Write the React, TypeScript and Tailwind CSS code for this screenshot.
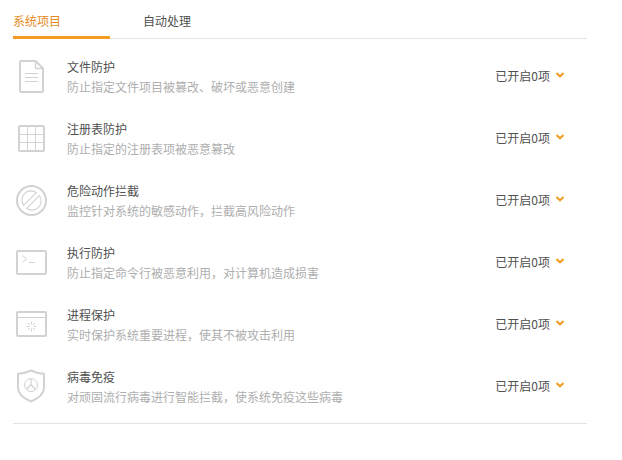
import type { ReactNode } from "react";

const tabs = [
  { label: "系统项目", active: true },
  { label: "自动处理", active: false },
];

const items = [
  { icon: <FileIcon />, title: "文件防护", desc: "防止指定文件项目被篡改、破坏或恶意创建", count: 0 },
  { icon: <GridIcon />, title: "注册表防护", desc: "防止指定的注册表项被恶意篡改", count: 0 },
  { icon: <BlockIcon />, title: "危险动作拦截", desc: "监控针对系统的敏感动作，拦截高风险动作", count: 0 },
  { icon: <TerminalIcon />, title: "执行防护", desc: "防止指定命令行被恶意利用，对计算机造成损害", count: 0 },
  { icon: <ProcessIcon />, title: "进程保护", desc: "实时保护系统重要进程，使其不被攻击利用", count: 0 },
  { icon: <ShieldIcon />, title: "病毒免疫", desc: "对顽固流行病毒进行智能拦截，使系统免疫这些病毒", count: 0 },
];

function Icon({ children }: { children: ReactNode }) {
  return (
    <svg
      className="h-9 w-9 shrink-0 text-[#d2d2d0]"
      viewBox="0 0 36 36"
      fill="none"
      stroke="currentColor"
      strokeWidth="2"
      strokeLinejoin="round"
      aria-hidden="true"
    >
      {children}
    </svg>
  );
}

function FileIcon() {
  return (
    <Icon>
      <path d="M8 2h14.5l7.5 7.5V32a1 1 0 0 1-1 1H8a1 1 0 0 1-1-1V3a1 1 0 0 1 1-1Z" />
      <path d="M22.5 2v7.5H30" strokeWidth="1.4" />
      <path d="M12 14.5h13M12 18.5h13M12 22.5h13" strokeWidth="1" />
    </Icon>
  );
}

function GridIcon() {
  return (
    <Icon>
      <rect x="6" y="5" width="25" height="25" rx="1" />
      <path d="M14.5 5v25M22.5 5v25M6 13.5h25M6 21.5h25" strokeWidth="1" />
    </Icon>
  );
}

function BlockIcon() {
  return (
    <Icon>
      <circle cx="18.5" cy="17.5" r="14.5" />
      <path d="M10.7 22.3A9 9 0 0 1 23.3 9.7Z" strokeWidth="1.1" />
      <path d="M26.3 12.7A9 9 0 0 1 13.7 25.3Z" strokeWidth="1.1" />
    </Icon>
  );
}

function TerminalIcon() {
  return (
    <Icon>
      <rect x="4" y="6" width="29" height="23" rx="1" />
      <path d="m9.5 10.5 4 3.5-4 3.5M16 17.5h6" strokeWidth="1" />
    </Icon>
  );
}

function ProcessIcon() {
  return (
    <Icon>
      <rect x="4" y="5" width="29" height="24" rx="1" />
      <path d="M4 10.5h29" strokeWidth="1" />
      <path
        d="M18.500 14.500v3M18.500 21.500v3M13.500 19.500h3M20.500 19.500h3M15 16l2 2M20 21l2 2M15 23l2-2M20 18l2-2"
        strokeWidth="1"
      />
    </Icon>
  );
}

function ShieldIcon() {
  return (
    <Icon>
      <path d="M18 1.5c4 2 8.5 3 13 3.2V19c0 6-5 10-13 13.5C10 29 5 25 5 19V4.700C9.500 4.500 14 3.500 18 1.500Z" />
      <circle cx="18" cy="16" r="6.5" strokeWidth="1" />
      <path d="M18 9.5v6l-4.500 5M18 15.5l4.500 5" strokeWidth="1.2" />
    </Icon>
  );
}

function Chevron() {
  return (
    <svg className="mb-0.5 h-2 w-2" viewBox="0 0 8 8" fill="none" stroke="#f39c1f" strokeWidth="2" aria-hidden="true">
      <path d="m.5 2 3.500 3.300L7.500 2" />
    </svg>
  );
}

export default function App() {
  return (
    <div className="min-h-screen bg-white pr-[35px] pl-[13px] font-['Noto_Sans_CJK_SC',sans-serif] text-xs text-[#505050]">
      <nav className="flex gap-[33px] border-b border-[#e4e4e4] pt-1">
        {tabs.map((tab) => (
          <a
            key={tab.label}
            href="#"
            className={`-mb-px w-[97px] border-b-3 pt-2 pb-1.5 leading-[18px] ${
              tab.active ? "border-[#f39c1f] text-[#e58a1c]" : "border-transparent"
            }`}
          >
            {tab.label}
          </a>
        ))}
      </nav>
      <ul className="border-b border-[#e4e4e4] pt-[7px] pb-[5px]">
        {items.map((item) => (
          <li key={item.title} className="flex h-[62px] items-center">
            {item.icon}
            <div className="ml-[18px] flex-1 leading-5">
              <h3>{item.title}</h3>
              <p className="text-[#aeaeae]">{item.desc}</p>
            </div>
            <button type="button" className="mr-[23px] flex items-center gap-1.5 pb-0.5">
              已开启{item.count}项
              <Chevron />
            </button>
          </li>
        ))}
      </ul>
    </div>
  );
}
